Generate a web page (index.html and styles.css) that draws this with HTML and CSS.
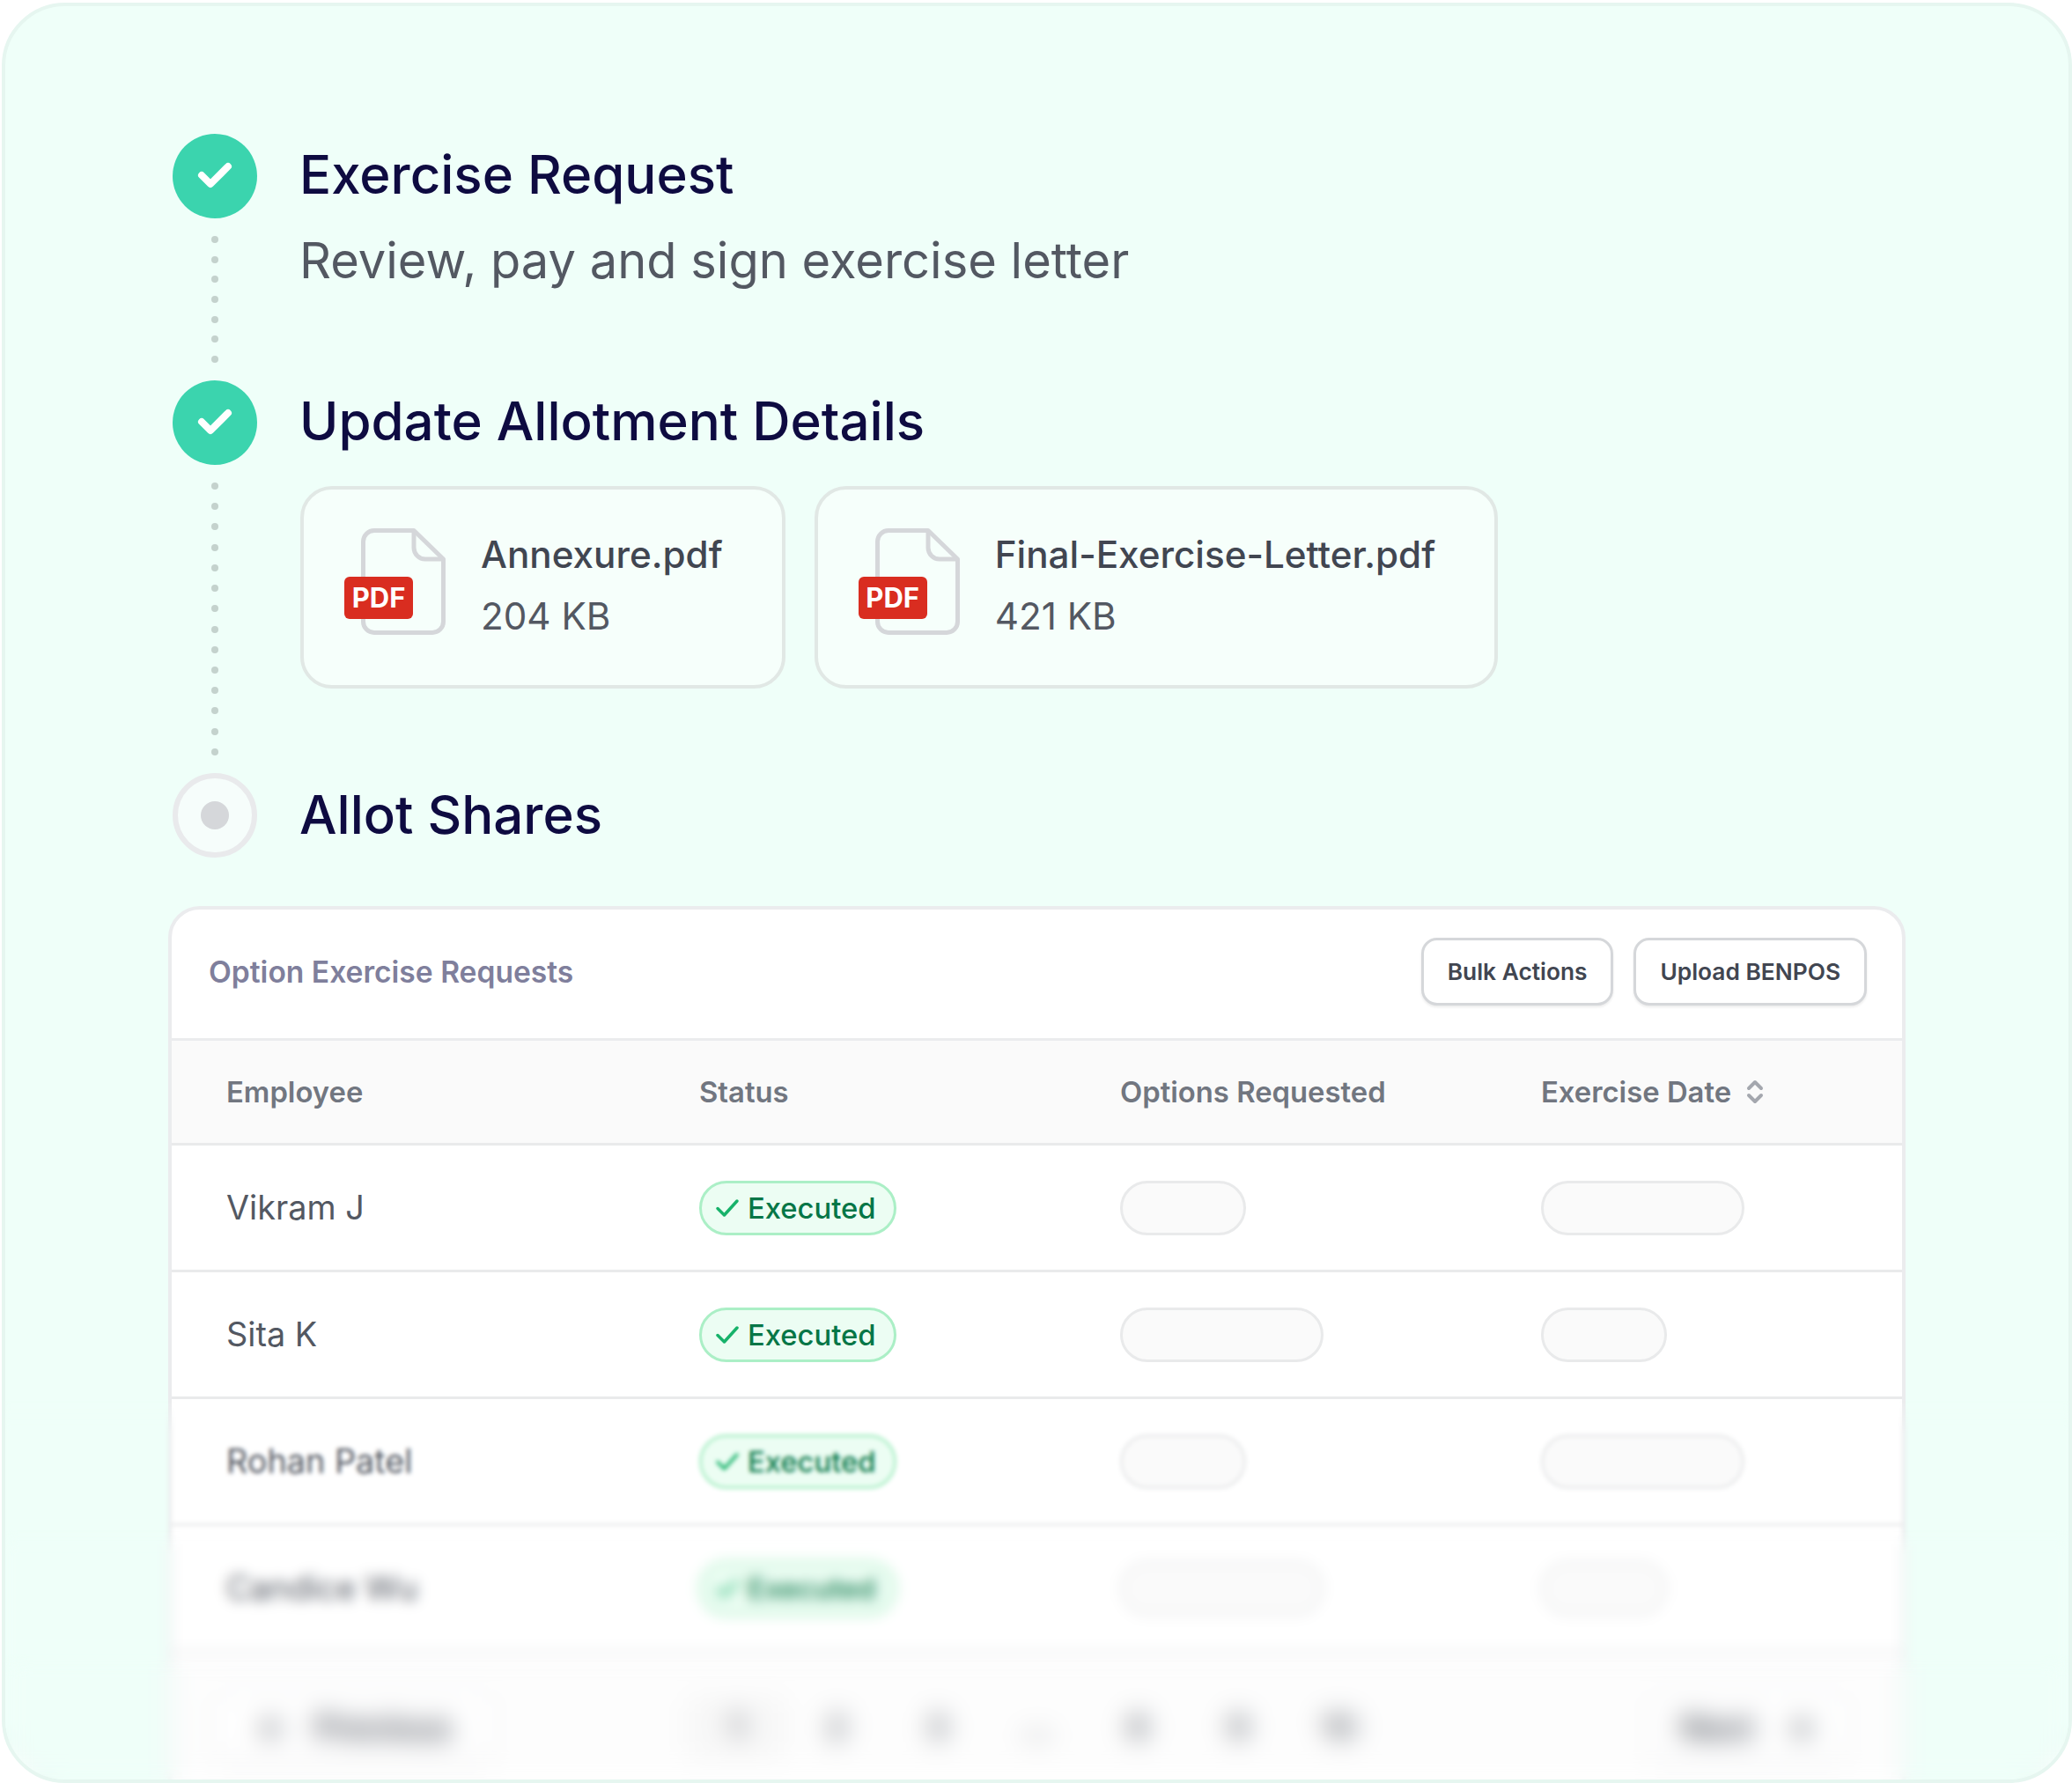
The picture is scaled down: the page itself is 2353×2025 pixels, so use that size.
FILE: index.html
```html
<!DOCTYPE html>
<html lang="en">
<head>
  <meta charset="UTF-8" />
  <meta name="viewport" content="width=device-width, initial-scale=1.0"/>
  <title>Exercise Request</title>
  <link rel="stylesheet" href="styles.css">
</head>
<body>
  <div class="frame">
    <div class="steps">
      <div class="step step-first">
        <div class="rail">
          <span class="circle done"><svg viewBox="0 0 96 96" width="96" height="96"><path d="M33 47L43 57L63 37" fill="none" stroke="#fff" stroke-width="8" stroke-linecap="round" stroke-linejoin="round"/></svg></span>
          <div class="dots"><i></i><i></i><i></i><i></i><i></i><i></i><i></i></div>
        </div>
        <div class="step-body">
          <h2>Exercise Request</h2>
          <p class="sub">Review, pay and sign exercise letter</p>
        </div>
      </div>

      <div class="step step-second">
        <div class="rail">
          <span class="circle done"><svg viewBox="0 0 96 96" width="96" height="96"><path d="M33 47L43 57L63 37" fill="none" stroke="#fff" stroke-width="8" stroke-linecap="round" stroke-linejoin="round"/></svg></span>
          <div class="dots"><i></i><i></i><i></i><i></i><i></i><i></i><i></i><i></i><i></i><i></i><i></i><i></i><i></i><i></i></div>
        </div>
        <div class="step-body">
          <h2>Update Allotment Details</h2>
          <div class="files">
            <div class="file">
              <div class="file-icon">
                <svg viewBox="0 0 96 121" width="96" height="121"><g fill="none" stroke="#d5d7da" stroke-width="5" stroke-linejoin="round"><path d="M15 2.5H60L93.5 35V106a12.5 12.5 0 0 1-12.5 12.5H15A12.5 12.5 0 0 1 2.5 106V15A12.5 12.5 0 0 1 15 2.5Z"/><path d="M60 2.5V22a13 13 0 0 0 13 13H93.5"/></g></svg>
                <span class="pdf">PDF</span>
              </div>
              <div class="file-text">
                <div class="file-name">Annexure.pdf</div>
                <div class="file-size">204 KB</div>
              </div>
            </div>
            <div class="file">
              <div class="file-icon">
                <svg viewBox="0 0 96 121" width="96" height="121"><g fill="none" stroke="#d5d7da" stroke-width="5" stroke-linejoin="round"><path d="M15 2.5H60L93.5 35V106a12.5 12.5 0 0 1-12.5 12.5H15A12.5 12.5 0 0 1 2.5 106V15A12.5 12.5 0 0 1 15 2.5Z"/><path d="M60 2.5V22a13 13 0 0 0 13 13H93.5"/></g></svg>
                <span class="pdf">PDF</span>
              </div>
              <div class="file-text">
                <div class="file-name">Final-Exercise-Letter.pdf</div>
                <div class="file-size">421 KB</div>
              </div>
            </div>
          </div>
        </div>
      </div>

      <div class="step step-last">
        <div class="rail">
          <span class="circle todo"><b></b></span>
        </div>
        <div class="step-body">
          <h2>Allot Shares</h2>
        </div>
      </div>
    </div>

    <div class="card">
      <div class="card-head">
        <span class="card-title">Option Exercise Requests</span>
        <div class="actions">
          <button>Bulk Actions</button>
          <button>Upload BENPOS</button>
        </div>
      </div>

      <div class="row head">
        <span>Employee</span>
        <span>Status</span>
        <span>Options Requested</span>
        <span class="sortable">Exercise Date
          <svg viewBox="0 0 20 28" width="20" height="28"><path d="M3 10L10 3L17 10M3 18L10 25L17 18" fill="none" stroke="#a4a7ae" stroke-width="4" stroke-linecap="round" stroke-linejoin="round"/></svg>
        </span>
      </div>

      <div class="row">
        <span class="name">Vikram J</span>
        <span class="badge"><svg viewBox="0 0 28 24" width="28" height="24"><path d="M3 12.5L10.5 20L25 4" fill="none" stroke="#17b26a" stroke-width="3.5" stroke-linecap="round" stroke-linejoin="round"/></svg>Executed</span>
        <span class="pill short"></span>
        <span class="pill long"></span>
      </div>
      <div class="row">
        <span class="name">Sita K</span>
        <span class="badge"><svg viewBox="0 0 28 24" width="28" height="24"><path d="M3 12.5L10.5 20L25 4" fill="none" stroke="#17b26a" stroke-width="3.5" stroke-linecap="round" stroke-linejoin="round"/></svg>Executed</span>
        <span class="pill long"></span>
        <span class="pill short"></span>
      </div>
      <div class="row">
        <span class="name">Rohan Patel</span>
        <span class="badge"><svg viewBox="0 0 28 24" width="28" height="24"><path d="M3 12.5L10.5 20L25 4" fill="none" stroke="#17b26a" stroke-width="3.5" stroke-linecap="round" stroke-linejoin="round"/></svg>Executed</span>
        <span class="pill short"></span>
        <span class="pill long"></span>
      </div>
      <div class="row">
        <span class="name">Candice Wu</span>
        <span class="badge"><svg viewBox="0 0 28 24" width="28" height="24"><path d="M3 12.5L10.5 20L25 4" fill="none" stroke="#17b26a" stroke-width="3.5" stroke-linecap="round" stroke-linejoin="round"/></svg>Executed</span>
        <span class="pill long"></span>
        <span class="pill short"></span>
      </div>

      <div class="pager">
        <button class="prev"><span>&larr;</span><span>Previous</span></button>
        <div class="pages">
          <span class="page current">1</span>
          <span class="page">2</span>
          <span class="page">3</span>
          <span class="page">...</span>
          <span class="page">8</span>
          <span class="page">9</span>
          <span class="page">10</span>
        </div>
        <button class="next"><span>Next</span><span>&rarr;</span></button>
      </div>
    </div>

    <!-- stacked layers get stronger toward the bottom -->
    <div class="blur blur-1"></div>
    <div class="blur blur-2"></div>
    <div class="blur blur-3"></div>
  </div>
</body>
</html>
```

FILE: styles.css
```css
* { box-sizing: border-box; }
body { margin: 0; padding: 3px 0 0 2px; background: #fff; font-family: Inter, "Liberation Sans", sans-serif; }

.frame { position: relative; height: 2022px; overflow: hidden; background: #effff9; border: 4px solid #e6f6f0; border-radius: 72px; padding-top: 145px; }

.steps { padding-left: 190px; }
.step { display: flex; gap: 49px; }
.step-first { height: 280px; }
.step-second { height: 446px; }
.step-last { height: 96px; }
.step-last h2 { padding-top: 1px; }
.rail { width: 96px; display: flex; flex-direction: column; align-items: center; }
.circle { width: 96px; height: 96px; border-radius: 50%; flex: none; display: flex; align-items: center; justify-content: center; }
.done { background: #3bd4ae; }
.todo { background: #f6fdfb; border: 6px solid #e9eaec; }
.todo b { width: 32px; height: 32px; border-radius: 50%; background: #d5d7da; }
.dots { flex: 1; display: flex; flex-direction: column; justify-content: space-between; padding: 20px 0; }
.dots i { width: 8px; height: 8px; border-radius: 50%; background: #c4d2cd; }

h2 { margin: 0 0 3px -1px; font-size: 60px; line-height: 93px; font-weight: 500; color: #0e0b41; }
.sub { margin: 17px 0 0 -1px; font-size: 56px; line-height: 68px; color: #535862; }

.files { display: flex; gap: 33px; margin-top: 27px; }
.file { height: 230px; display: flex; align-items: center; gap: 40px; padding: 0 67px 0 46px; background: #f6fffb; border: 4px solid #e1e8e5; border-radius: 36px; }
.file-icon { position: relative; width: 115px; height: 121px; display: flex; justify-content: flex-end; margin-bottom: 14px; }
.pdf { position: absolute; left: 0; top: 55px; width: 78px; height: 48px; background: #d92d20; border-radius: 6px; color: #fff; font-size: 31px; font-weight: 700; line-height: 48px; text-align: center; }
.file-text { margin-bottom: 4px; }
.file-name { font-size: 42.2px; line-height: 70px; font-weight: 500; color: #414651; }
.file-size { font-size: 42.2px; line-height: 70px; color: #535862; }

.card { width: 1973px; margin: 55px 0 0 185px; background: #fff; border: 4px solid #ebecee; border-radius: 36px 36px 0 0; }
.card-head { height: 149px; display: flex; align-items: center; justify-content: space-between; padding: 0 40px 6px 42px; border-bottom: 3px solid #ebecee; }
.card-title { font-size: 33.6px; font-weight: 600; color: #7f7f9c; }
.actions { display: flex; gap: 23px; }
button { font-family: inherit; background: #fff; border: 3px solid #d5d7da; border-radius: 18px; color: #414651; font-size: 26.3px; font-weight: 600; height: 77px; padding: 0 27px; box-shadow: 0 2px 3px rgba(10, 13, 18, 0.08); }

.row { display: grid; grid-template-columns: 537px 478px 478px 1fr; align-items: center; height: 144px; padding-left: 62px; border-bottom: 3px solid #e9eaeb; }
.head { height: 119px; background: #fafafa; font-size: 32.8px; font-weight: 600; color: #717680; }
.sortable { display: flex; align-items: center; gap: 17px; }
.name { font-size: 37.8px; color: #535862; margin-top: -1px; }
.badge { justify-self: start; height: 62px; display: flex; align-items: center; gap: 9px; padding: 0 20px 0 15px; background: #ecfdf3; border: 3px solid #abefc6; border-radius: 31px; color: #067647; font-size: 32.8px; font-weight: 500; }
.pill { height: 62px; background: #fafafa; border: 3px solid #e9eaeb; border-radius: 31px; }
.short { width: 143px; }
.long { width: 231px; }

.pager { display: flex; align-items: flex-start; height: 170px; padding: 45px 63px 0 50px; background: #fdfdfd; }
.pager button { display: flex; align-items: center; justify-content: center; height: 78px; padding: 0; border-color: #eeeff0; font-size: 37px; color: #414651; }
.prev { width: 315px; gap: 30px; }
.next { width: 225px; gap: 34px; margin-left: auto; }
.pages { display: flex; align-items: center; height: 78px; margin-left: 219px; }
.page { width: 114px; text-align: center; font-size: 36px; font-weight: 600; color: #535862; }
.current { background: #f7f7f7; border-radius: 14px; line-height: 70px; }

.blur { position: absolute; left: 0; right: 0; bottom: 0; pointer-events: none; }
.blur-1 { top: 1582px; backdrop-filter: blur(2.5px); mask-image: linear-gradient(transparent, #000 40px); }
.blur-2 { top: 1730px; backdrop-filter: blur(7px); mask-image: linear-gradient(transparent, #000 30px); }
.blur-3 { top: 1870px; backdrop-filter: blur(13px); mask-image: linear-gradient(transparent, #000 30px); }
```
